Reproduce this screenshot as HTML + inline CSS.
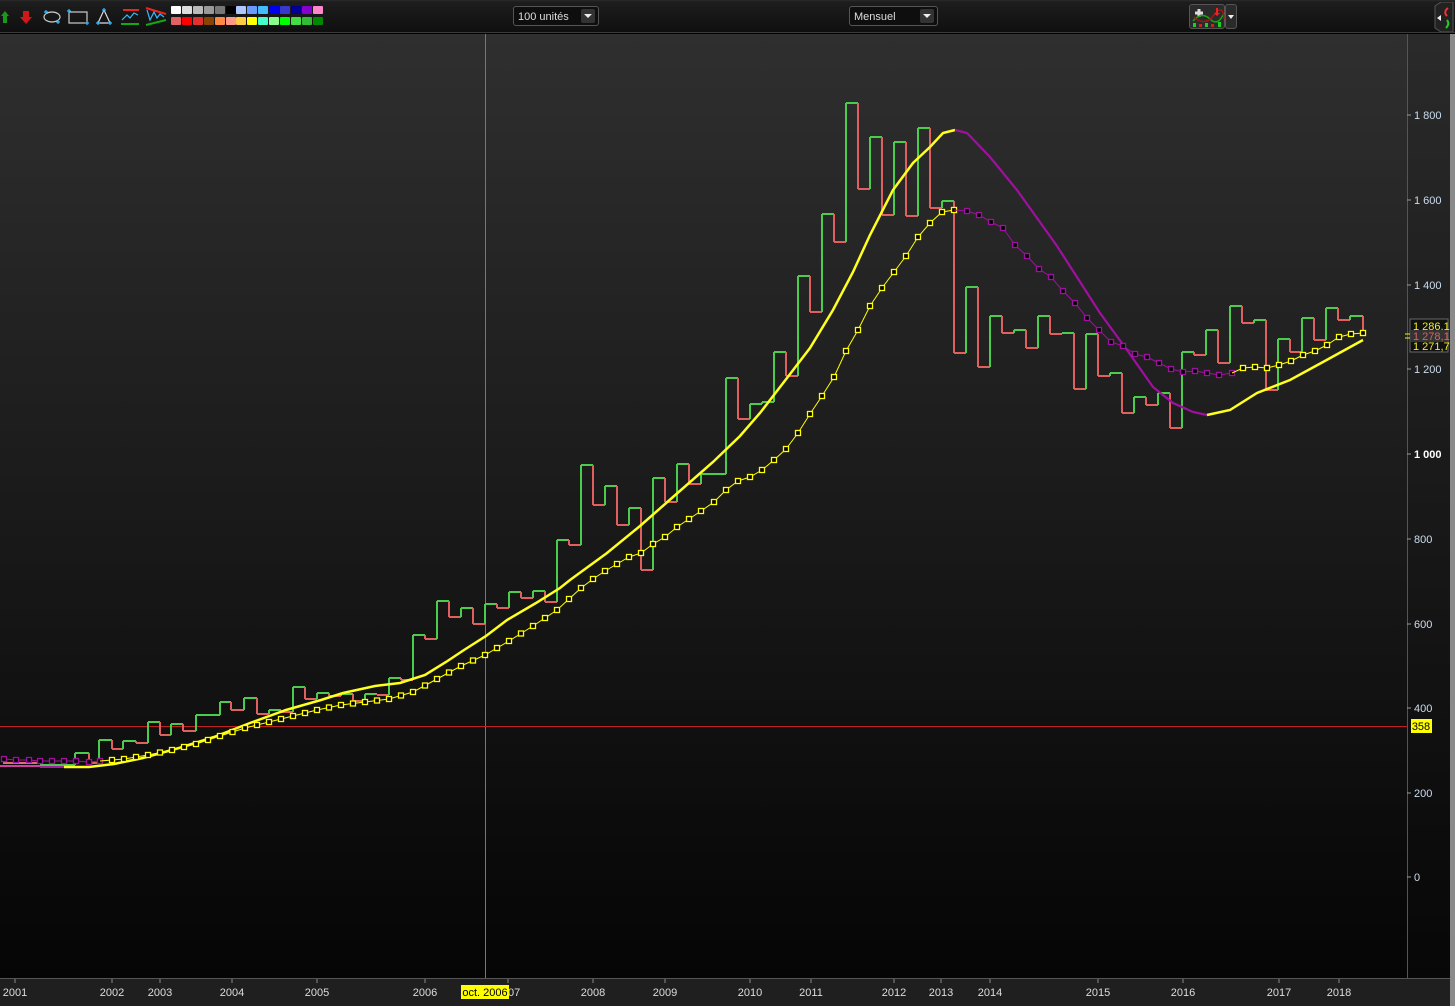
<!DOCTYPE html>
<html><head><meta charset="utf-8"><style>
html,body{margin:0;padding:0;background:#000;width:1455px;height:1006px;overflow:hidden;font-family:"Liberation Sans",Arial,sans-serif}
#tb{position:absolute;left:0;top:0;width:1455px;height:33px;background:linear-gradient(#2a2a2a 0,#1d1d1d 2px,#0f0f0f 33px);border-bottom:1px solid #3a3a3a;box-sizing:border-box}
.dd{position:absolute;top:6px;height:20px;border:1px solid #555;border-radius:3px;background:#0e0e0e;color:#ddd;font-size:11px;line-height:20px;box-sizing:border-box;padding-left:4px}
.dd b{position:absolute;right:3px;top:2px;width:14px;height:14px;background:#333;border-radius:2px}
.dd b:after{content:"";position:absolute;left:3px;top:5px;border-left:4px solid transparent;border-right:4px solid transparent;border-top:4px solid #eee}
.sw{position:absolute;width:10px;height:8px;border-radius:1px}
#chart{position:absolute;left:0;top:34px;width:1407px;height:944px;background:linear-gradient(#2f2f2f,#050505)}
#axis{position:absolute;left:1407px;top:34px;width:43px;height:944px;background:linear-gradient(#2a2a2a,#070707);border-left:1px solid #555;box-sizing:border-box}
#xa{position:absolute;left:0;top:978px;width:1450px;height:28px;background:#1f1f1f;border-top:1px solid #555;box-sizing:border-box}
#sb{position:absolute;left:1450px;top:34px;width:5px;height:972px;background:#8a8a8a}
</style></head><body>
<div id="chart"></div><div id="axis"></div><div id="xa"></div><div id="sb"></div>
<div id="tb">
<svg width="330" height="33" style="position:absolute;left:0;top:0">
<path d="M1 16 L5 11 L9 16 L7 16 L7 23 L3 23 L3 16Z" fill="#1a9a1a"/>
<path d="M23 11 L29 11 L29 17 L32 17 L26 24 L20 17 L23 17Z" fill="#d01818"/>
<ellipse cx="52" cy="17" rx="8" ry="5" fill="none" stroke="#ccc" stroke-width="1.2"/>
<path d="M44 12h4M46 10v4M56 22h4M58 20v4" stroke="#3bf" stroke-width="1.2"/>
<rect x="69" y="12" width="18" height="11" fill="none" stroke="#ccc" stroke-width="1.2"/>
<path d="M67 11h4M69 9v4M85 23h4M87 21v4" stroke="#3bf" stroke-width="1.2"/>
<path d="M98 23 L104 10 L110 23Z" fill="none" stroke="#ddd" stroke-width="1.2"/>
<path d="M96 23h4M98 21v4M108 23h4M110 21v4M102 10h4M104 8v4" stroke="#3bf" stroke-width="1.2"/>
<path d="M123 10h16" stroke="#e22" stroke-width="2"/><path d="M121 24h18" stroke="#1a1" stroke-width="2"/>
<path d="M122 20 L127 15 L130 18 L134 13 L138 15" fill="none" stroke="#3bf" stroke-width="1.2"/>
<path d="M146 8 L166 14" stroke="#e22" stroke-width="2"/><path d="M146 25 L166 20" stroke="#1a1" stroke-width="2"/>
<path d="M147 10 L150 20 L154 12 L157 18 L160 14 L164 17" fill="none" stroke="#3bf" stroke-width="1.2"/>
</svg>
<div id="pal"></div>
<div class="dd" style="left:513px;width:86px">100 unités<b></b></div>
<div class="dd" style="left:849px;width:89px">Mensuel<b></b></div>
<div style="position:absolute;left:1189px;top:4px;width:36px;height:25px;background:#2a2a2a;border:1px solid #555;border-radius:3px;box-sizing:border-box">
<svg width="36" height="25"><path d="M5 8h8M9 4v8" stroke="#ddd" stroke-width="3"/><path d="M3 16 Q12 6 20 14 T34 8" stroke="#1a1" fill="none" stroke-width="1.5"/><path d="M4 12 Q15 22 24 10 T34 14" stroke="#a11" fill="none" stroke-width="1.5"/><rect x="3" y="18" width="3" height="4" fill="#2c2"/><rect x="9" y="19" width="3" height="3" fill="#c22"/><rect x="15" y="18" width="3" height="4" fill="#2c2"/><rect x="21" y="19" width="3" height="3" fill="#c22"/><rect x="28" y="17" width="3" height="5" fill="#2c2"/><path d="M26 3v5l-2 0 3 3 3-3-2 0v-5z" fill="#e22"/></svg></div>
<div style="position:absolute;left:1225px;top:4px;width:12px;height:25px;background:#2a2a2a;border:1px solid #555;border-radius:3px;box-sizing:border-box"><div style="position:absolute;left:2px;top:10px;border-left:3px solid transparent;border-right:3px solid transparent;border-top:4px solid #eee"></div></div>
<svg width="24" height="30" style="position:absolute;left:1431px;top:2px"><path d="M4 4 L10 0 L22 0 L22 30 L10 30 L4 26Z" fill="#222" stroke="#555"/><path d="M6 16 L10 13 L10 19Z" fill="#eee"/><path d="M17 6 Q12 10 16 14" stroke="#e33" fill="none" stroke-width="2"/><path d="M15 26 Q19 22 16 18" stroke="#2c2" fill="none" stroke-width="2"/></svg>
</div>
<svg id="s" width="1455" height="1006" style="position:absolute;left:0;top:0" font-family="Liberation Sans, Arial, sans-serif"></svg>
<script>
var pal=document.getElementById('pal');
var r1=['#fff','#ddd','#bbb','#999','#777','#000','#b0c8ff','#6a9aff','#44bbff','#0000ee','#3838cc','#000099','#8800cc','#ff88cc'];
var r2=['#e06262','#ff0000','#e03030','#884400','#ff8844','#ff9988','#ffcc44','#ffff00','#44ffcc','#88ff88','#00ff00','#44dd44','#33bb33','#008800'];
var h='';for(var i=0;i<14;i++){h+='<div class="sw" style="left:'+(171+i*10.9)+'px;top:6px;background:'+r1[i]+'"></div>';h+='<div class="sw" style="left:'+(171+i*10.9)+'px;top:17px;background:'+r2[i]+'"></div>';}
pal.innerHTML=h;
var S='';
var ys=[[115,'1 800'],[200,'1 600'],[285,'1 400'],[369,'1 200'],[454,'1 000'],[539,'800'],[624,'600'],[708,'400'],[793,'200'],[877,'0']];
ys.forEach(function(a){S+='<line x1="1407" y1="'+a[0]+'" x2="1411" y2="'+a[0]+'" stroke="#999"/><text x="1414" y="'+(a[0]+4)+'" font-size="11" fill="'+(a[1]=='1 000'?'#fff':'#cde')+'" '+(a[1]=='1 000'?'font-weight="bold"':'')+'>'+a[1]+'</text>';});
var xs=[[15,'2001'],[112,'2002'],[160,'2003'],[232,'2004'],[317,'2005'],[425,'2006'],[508,'2007'],[593,'2008'],[665,'2009'],[750,'2010'],[811,'2011'],[894,'2012'],[941,'2013'],[990,'2014'],[1098,'2015'],[1183,'2016'],[1279,'2017'],[1339,'2018']];
xs.forEach(function(a){S+='<line x1="'+a[0]+'" y1="979" x2="'+a[0]+'" y2="983" stroke="#888"/><text x="'+a[0]+'" y="996" font-size="11" fill="#ddd" text-anchor="middle">'+a[1]+'</text>';});
S+='<rect x="461" y="985" width="48" height="14" fill="#ff0"/><text x="485" y="996" font-size="11" fill="#000" text-anchor="middle">oct. 2006</text>';
S+='<line x1="485.5" y1="34" x2="485.5" y2="978" stroke="#777" stroke-width="1"/><line x1="0" y1="726.5" x2="1407" y2="726.5" stroke="#c02020"/>';
S+='<rect x="1411" y="719" width="21" height="14" fill="#ff0"/><text x="1421" y="730" font-size="11" fill="#000" text-anchor="middle">358</text>';
var L=[[40,765],[75,753],[89,763],[99,740],[112,749],[123,741],[136,743],[148,722],[160,735],[171,724],[183,731],[196,715],[220,702],[231,710],[244,698],[257,714],[269,710],[281,712],[293,687],[305,699],[317,693],[329,696],[341,694],[353,701],[365,694],[377,695],[389,678],[401,680],[413,635],[425,639],[437,601],[449,617],[461,608],[473,624],[485,604],[497,608],[509,592],[521,598],[533,591],[545,602],[557,540],[569,545],[581,465],[593,505],[605,486],[617,525],[629,508],[641,570],[653,478],[665,502],[677,464],[689,484],[701,474],[726,378],[738,419],[750,404],[762,402],[774,352],[786,376],[798,276],[810,312],[822,214],[834,242],[846,103],[858,189],[870,137],[882,215],[894,142],[906,216],[918,128],[930,208],[942,201],[954,353],[966,287],[978,367],[990,316],[1002,333],[1014,330],[1026,348],[1038,316],[1050,334],[1062,333],[1074,389],[1086,334],[1098,376],[1110,373],[1122,413],[1134,397],[1146,405],[1158,393],[1170,428],[1182,352],[1194,355],[1206,330],[1218,363],[1230,306],[1242,323],[1254,320],[1266,390],[1278,339],[1290,352],[1302,318],[1314,340],[1326,308],[1338,320],[1350,316],[1363,335]];
for(var i=0;i<L.length;i++){var x=L[i][0],y=L[i][1];var nx=i+1<L.length?L[i+1][0]:1363;var c='#4ccc4c';if(i>0){c=y>L[i-1][1]?'#e06060':'#4ccc4c';S+='<line x1="'+x+'" y1="'+L[i-1][1]+'" x2="'+x+'" y2="'+y+'" stroke="'+c+'" stroke-width="2"/>';}if(i<L.length-1)S+='<line x1="'+x+'" y1="'+y+'" x2="'+nx+'" y2="'+y+'" stroke="'+c+'" stroke-width="2"/>';}
S+='<line x1="0" y1="766" x2="40" y2="766" stroke="#d040a0" stroke-width="2"/><line x1="3" y1="763" x2="40" y2="763" stroke="#e07070" stroke-width="2"/><line x1="40" y1="767" x2="64" y2="767" stroke="#a020a0" stroke-width="2"/>';
var Y=[[64,767],[89,767],[114,764],[143,758],[179,748],[214,737],[250,723],[286,710],[321,700],[343,693],[375,686],[400,683],[425,675],[446,662],[464,650],[486,636],[507,620],[536,603],[560,588],[570,580],[607,553],[640,526],[673,497],[713,462],[740,436],[760,413],[787,378],[810,348],[833,310],[853,272],[870,235],[893,190],[913,163],[930,147],[943,133],[955,130]];
function pl(a){return a.map(function(p){return p[0]+','+p[1]}).join(' ');}
S+='<polyline points="'+pl(Y)+'" fill="none" stroke="#ffff20" stroke-width="2.5"/>';
var M=[[955,130],[967,133],[990,157],[1017,190],[1057,246],[1100,313],[1127,350],[1153,387],[1173,403],[1193,412],[1207,415]];
S+='<polyline points="'+pl(M)+'" fill="none" stroke="#a010a0" stroke-width="2.2"/>';
var Y2=[[1207,415],[1230,410],[1257,393],[1290,380],[1323,362],[1363,340]];
S+='<polyline points="'+pl(Y2)+'" fill="none" stroke="#ffff20" stroke-width="2.5"/>';
var D1=[[4,759],[16,760],[29,760],[40,761],[52,761],[64,761],[76,761],[89,762],[100,761]];
var D2r=[[100,761],[124,759],[148,755],[172,750],[196,744],[220,736],[245,728],[269,722],[293,716],[317,710],[341,705],[365,702],[389,699],[413,692],[437,679],[461,666],[485,655],[509,641],[533,626],[557,610]];
var D2=[];for(var k=0;k<D2r.length;k++){D2.push(D2r[k]);if(k+1<D2r.length)D2.push([(D2r[k][0]+D2r[k+1][0])/2,(D2r[k][1]+D2r[k+1][1])/2]);}
D2=D2.concat([[569,599],[581,588],[593,579],[605,571],[617,564],[629,557],[641,553],[653,544],[665,537],[677,527],[689,519],[701,511],[714,502],[726,490],[738,481],[750,477],[762,470],[774,460],[786,449],[798,433],[810,414],[822,396],[834,377],[846,351],[858,330],[870,306],[882,288],[894,272],[906,256],[918,237],[930,223],[942,212],[954,210]]);
var D3=[[954,210],[967,211],[979,215],[991,222],[1003,228],[1015,245],[1027,256],[1039,269],[1051,277],[1063,291],[1075,303],[1087,318],[1099,330],[1111,342],[1123,346],[1135,354],[1147,357],[1159,363],[1171,369],[1183,372],[1195,371],[1207,373],[1219,375],[1232,373]];
var D4=[[1232,373],[1243,368],[1255,367],[1267,368],[1279,365],[1291,361],[1303,355],[1315,351],[1327,345],[1339,337],[1351,334],[1363,333]];
function dots(a,c,skip){var s='<polyline points="'+pl(a)+'" fill="none" stroke="'+c+'" stroke-width="1"/>';a.forEach(function(p,i){if(skip&&i==0)return;s+='<rect x="'+(p[0]-2.5)+'" y="'+(p[1]-2.5)+'" width="5" height="5" fill="#000" stroke="'+c+'" stroke-width="1.3"/>';});return s;}
S+=dots(D1,'#a010a0')+dots(D2,'#ffff00',1)+dots(D3,'#a010a0',1)+dots(D4,'#ffff00',1);
S+='<rect x="1410" y="319" width="38" height="33" fill="#111" stroke="#666"/><text x="1413" y="330" font-size="11" fill="#ee2">1 286,1</text><rect x="1411" y="330" width="36" height="12" fill="#333"/><text x="1413" y="340" font-size="11" fill="#e06060">1 278,1</text><text x="1413" y="350" font-size="11" fill="#ee2">1 271,7</text><line x1="1405" y1="334" x2="1410" y2="334" stroke="#ee2"/><line x1="1405" y1="338" x2="1410" y2="338" stroke="#ee2"/>';
document.getElementById('s').innerHTML=S;
</script>
</body></html>
